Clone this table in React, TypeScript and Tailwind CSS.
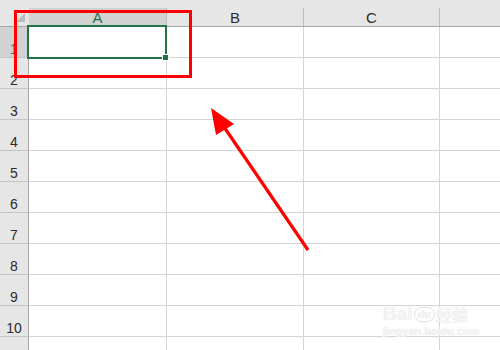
const rows = [1, 2, 3, 4, 5, 6, 7, 8, 9, 10, 11];

function RowHead({ n }: { n: number }) {
  const active = n === 1;
  return (
    <div
      className={`w-[29px] shrink-0 flex items-end justify-center border-r border-b border-r-[#a6a6a6] border-b-[#c4c4c4] text-[14px] leading-[16px] ${
        active ? 'bg-[#d2d2d2] text-[#217346]' : 'bg-[#e6e6e6] text-[#2b2b2b]'
      }`}
    >
      {n <= 10 ? n : null}
    </div>
  );
}

export default function App() {
  return (
    <div className="relative w-[500px] h-[350px] overflow-hidden bg-white font-['Liberation_Sans',Arial,sans-serif] select-none">
      {/* strip under the formula bar */}
      <div className="h-[8px] bg-[#e6e6e6]" />

      {/* column headers */}
      <div className="flex h-[19px] bg-[#e6e6e6] border-b border-[#a6a6a6] text-[15px] leading-[17px]">
        <div className="w-[29px] shrink-0 relative">
          <svg className="absolute left-0 top-0" width="29" height="18" viewBox="0 0 29 18">
            <polygon points="25,5 25,14 16,14" fill="#bcbcbc" />
          </svg>
        </div>
        <div className="w-[138px] shrink-0 flex items-end justify-center bg-[#d2d2d2] text-[#217346] border-r border-[#bdbdbd]">A</div>
        <div className="w-[137px] shrink-0 flex items-end justify-center text-[#2b2b2b] border-r border-[#bdbdbd]">B</div>
        <div className="w-[136px] shrink-0 flex items-end justify-center text-[#2b2b2b] border-r border-[#bdbdbd]">C</div>
        <div className="flex-1" />
      </div>

      {/* grid body */}
      {rows.map(n => (
        <div key={n} className="flex h-[31px]">
          <RowHead n={n} />
          <div className="w-[138px] shrink-0 border-r border-b border-[#d4d4d4]" />
          <div className="w-[137px] shrink-0 border-r border-b border-[#d4d4d4]" />
          <div className="w-[136px] shrink-0 border-r border-b border-[#d4d4d4]" />
          <div className="flex-1 border-b border-[#d4d4d4]" />
        </div>
      ))}

      {/* active cell A1 with fill handle */}
      <div className="absolute left-[27px] top-[25px] w-[140px] h-[34px] border-2 border-[#217346]" />
      <div className="absolute left-[162px] top-[54px] w-[7px] h-[7px] bg-[#217346] border border-white" />

      {/* red highlight box */}
      <div className="absolute left-[14px] top-[10px] w-[178px] h-[68px] border-[3px] border-[#ff0000]" />

      {/* arrow */}
      <svg className="absolute left-0 top-0 pointer-events-none" width="500" height="350" viewBox="0 0 500 350">
        <line x1="308" y1="250" x2="222" y2="124" stroke="#ff0000" strokeWidth="3.2" />
        <polygon points="211,108 234,124 216,135" fill="#ff0000" />
      </svg>

      {/* watermark */}
      <div className="absolute left-[383px] top-[298px] w-[95px] text-[#f4f4f4] pointer-events-none [text-shadow:0_0_1px_#dedede]">
        <div className="flex items-end gap-[1px] h-[26px]">
          <span className="text-[19px] leading-[20px] font-bold">Bai</span>
          <span className="text-[11px] leading-[13px] font-bold rounded-full border border-[#e2e2e2] px-[3px] mb-[2px]">du</span>
          <span className="text-[16px] leading-[20px] font-bold font-['Noto_Sans_CJK_SC',sans-serif]">经验</span>
        </div>
        <div className="text-[11px] leading-[14px] font-bold">jingyan.baidu.com</div>
      </div>
    </div>
  );
}
